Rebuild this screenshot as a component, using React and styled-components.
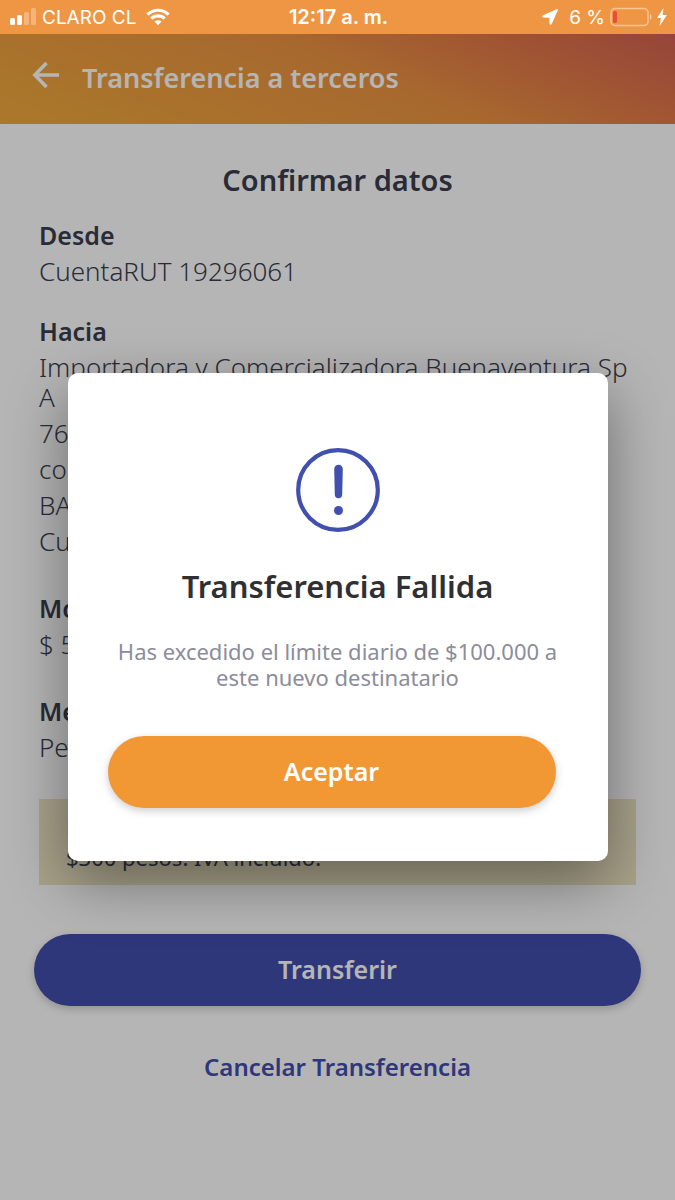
import styled, { createGlobalStyle } from "styled-components";

const sections = [
    { title: "Desde", gap: 30, lines: ["CuentaRUT 19296061"] },
    {
        title: "Hacia",
        gap: 37,
        lines: [
            "Importadora y Comercializadora Buenaventura Sp\nA",
            "76",
            "co",
            "BANCO",
            "Cuenta",
        ],
    },
    { title: "Monto", gap: 37, lines: ["$ 5"] },
    { title: "Mensaje", gap: 37, lines: ["Pe"] },
];

export default function App() {
    return (
        <Page>
            <GlobalStyle />
            <StatusBar />
            <Screen>
                <TopBar>
                    <BackButton type="button" aria-label="Volver">
                        <svg width="28" height="28" viewBox="0 0 28 28" fill="none" stroke="currentColor" strokeWidth="3.5">
                            <path d="M14.5 2 2.8 14l11.7 12M2.8 14H27" />
                        </svg>
                    </BackButton>
                    <TopTitle>Transferencia a terceros</TopTitle>
                </TopBar>
                <Content>
                    <PageTitle>Confirmar datos</PageTitle>
                    <Details>
                        {sections.map((section) => (
                            <Section key={section.title} $gap={section.gap}>
                                <Label>{section.title}</Label>
                                {section.lines.map((line) => (
                                    <Value key={line}>{line}</Value>
                                ))}
                            </Section>
                        ))}
                        <Note>Esta transferencia tiene un costo de{"\n"}$300 pesos. IVA incluido.</Note>
                    </Details>
                    <PillButton type="button" $color="#424eac">Transferir</PillButton>
                    <CancelLink href="#">Cancelar Transferencia</CancelLink>
                </Content>
                <Backdrop>
                    <Modal role="alertdialog" aria-labelledby="modal-title" aria-describedby="modal-text">
                        <svg width="84" height="84" viewBox="0 0 84 84" fill="none" stroke="#414fae">
                            <circle cx="42" cy="42" r="39.8" strokeWidth="4.2" />
                            <path d="M38.2 21a4.3 4.3 0 0 1 8.600 0l-.6 25.500a3.700 3.700 0 0 1-7.400 0z" fill="#414fae" stroke="none" />
                            <circle cx="42.5" cy="62.5" r="4.5" fill="#414fae" stroke="none" />
                        </svg>
                        <ModalTitle id="modal-title">Transferencia Fallida</ModalTitle>
                        <ModalText id="modal-text">
                            Has excedido el límite diario de $100.000 a este nuevo destinatario
                        </ModalText>
                        <AcceptRow>
                            <PillButton type="button" $color="#f19835">Aceptar</PillButton>
                        </AcceptRow>
                    </Modal>
                </Backdrop>
            </Screen>
        </Page>
    );
}

function StatusBar() {
    return (
        <StatusBarContainer>
            <StatusGroup>
                <svg width="28" height="18" viewBox="0 0 28 18" fill="#fff">
                    <rect x="0" y="10" width="5" height="7" rx="1.5" />
                    <rect x="7" y="7" width="5" height="10" rx="1.5" />
                    <rect x="14" y="4" width="5" height="13" rx="1.5" opacity=".3" />
                    <rect x="21" y="0" width="5" height="17" rx="1.5" opacity=".3" />
                </svg>
                <Carrier>CLARO CL</Carrier>
                <svg width="24" height="18" viewBox="0 0 24 18" fill="none" stroke="#fff" strokeWidth="3.2">
                    <path d="M1.5 6.6a14.8 14.8 0 0 1 21 0" />
                    <path d="M5.3 10.7a9.5 9.5 0 0 1 13.4 0" />
                    <path d="M12 17.3l-3.6-3.700a5.2 5.2 0 0 1 7.2 0z" fill="#fff" stroke="none" />
                </svg>
            </StatusGroup>
            <Clock>12:17 a. m.</Clock>
            <StatusGroup $end>
                <svg width="16" height="16" viewBox="0 0 16 16" fill="#fff">
                    <path d="M14.7.2 1 6.3c-1.2.6-1 2 .3 2.1L7.3 8.7l.3 6c.1 1.3 1.5 1.5 2.1.3L15.8 1.3c.3-.8-.3-1.4-1.1-1.1z" />
                </svg>
                <Battery>6 %</Battery>
                <svg width="42" height="20" viewBox="0 0 42 20" fill="none">
                    <rect x="1" y="1.5" width="37" height="17" rx="4" stroke="#fff" strokeOpacity=".45" strokeWidth="1.5" />
                    <rect x="3" y="4" width="4" height="12" rx="1.5" fill="#ea4b3c" />
                    <path d="M40 7c2 .8 2 5.2 0 6z" fill="#fff" opacity=".5" />
                </svg>
                <svg width="10" height="18" viewBox="0 0 10 18" fill="#fff">
                    <path d="M6.5 0 0 10h4L2.6 18 10 7H5.6z" />
                </svg>
            </StatusGroup>
        </StatusBarContainer>
    );
}

const GlobalStyle = createGlobalStyle`
    * {
        box-sizing: border-box;
        margin: 0;
    }
    body {
        font-family: "Noto Sans", sans-serif;
        color: #3b3e4e;
        background-color: #fff;
    }
    button {
        font-family: inherit;
        border: none;
        cursor: pointer;
    }
    svg {
        flex-shrink: 0;
    }
`

const Page = styled.div`
    display: flex;
    flex-direction: column;
    min-height: 100vh;
`

const StatusBarContainer = styled.div`
    display: grid;
    grid-template-columns: 1fr auto 1fr;
    align-items: center;
    height: 34px;
    padding: 0 8px 0 10px;
    font-family: Inter, sans-serif;
    font-size: 19px;
    color: #fff;
    background-color: #ee9644;
`

const StatusGroup = styled.div`
    display: flex;
    align-items: center;
    justify-content: ${({ $end }) => ($end ? "flex-end" : "flex-start")};
    gap: ${({ $end }) => ($end ? "5px" : "4px")};
`

const Carrier = styled.span`
    margin-right: 6px;
`

const Clock = styled.span`
    font-size: 20px;
    font-weight: 600;
`

const Battery = styled.span`
    margin-left: 6px;
`

const Screen = styled.div`
    position: relative;
    display: flex;
    flex-direction: column;
    flex: 1;
`

const TopBar = styled.header`
    display: flex;
    align-items: center;
    gap: 22px;
    height: 90px;
    padding: 0 32px 4px;
    color: #fff;
    background: linear-gradient(22deg, #f1ab3c 0%, #ec9342 55%, #e27848 78%, #d46153 100%);
`

const BackButton = styled.button`
    display: flex;
    padding: 0 0 4px;
    color: inherit;
    background: none;
`

const TopTitle = styled.h1`
    font-size: 27px;
    font-weight: 600;
`

const Content = styled.main`
    display: flex;
    flex-direction: column;
    align-items: center;
    padding: 35px 34px;
`

const PageTitle = styled.h2`
    font-size: 29px;
    line-height: 42px;
    font-weight: 600;
`

const Details = styled.div`
    align-self: stretch;
    margin: 19px 5px 49px;
`

const Section = styled.section`
    display: flex;
    flex-direction: column;
    gap: 6px;
    margin-bottom: ${({ $gap }) => $gap}px;
`

const Label = styled.h3`
    font-size: 25px;
    line-height: 30px;
    font-weight: 600;
`

const Value = styled.p`
    font-size: 26px;
    line-height: 30px;
    font-weight: 300;
    white-space: pre-line;
`

const Note = styled.p`
    padding: 13px 27px;
    font-size: 22px;
    line-height: 30px;
    white-space: pre-line;
    background-color: #ede5c3;
`

const PillButton = styled.button`
    width: 100%;
    height: 72px;
    padding: 0 0 3px;
    border-radius: 36px;
    font-size: 25px;
    font-weight: 600;
    color: #fff;
    background-color: ${({ $color }) => $color};
    box-shadow: 0 3px 8px rgba(0, 0, 0, 0.2);
`

const CancelLink = styled.a`
    margin-top: 44px;
    font-size: 24px;
    line-height: 34px;
    font-weight: 600;
    color: #424eac;
    text-decoration: none;
`

const Backdrop = styled.div`
    position: absolute;
    inset: 0;
    display: flex;
    align-items: center;
    justify-content: center;
    background-color: rgba(0, 0, 0, 0.29);
`

const Modal = styled.div`
    display: flex;
    flex-direction: column;
    align-items: center;
    width: 80%;
    padding: 75px 40px 53px;
    border-radius: 10px;
    background-color: #fff;
    box-shadow: 0 20px 60px rgba(0, 0, 0, 0.4);
`

const ModalTitle = styled.h2`
    margin-top: 33px;
    font-size: 31px;
    line-height: 42px;
    font-weight: 600;
    color: #303033;
`

const ModalText = styled.p`
    margin-top: 31px;
    font-size: 22px;
    line-height: 26px;
    text-align: center;
    color: #8b8c9c;
`

const AcceptRow = styled.div`
    align-self: stretch;
    margin-top: 46px;
    padding-right: 12px;
`
